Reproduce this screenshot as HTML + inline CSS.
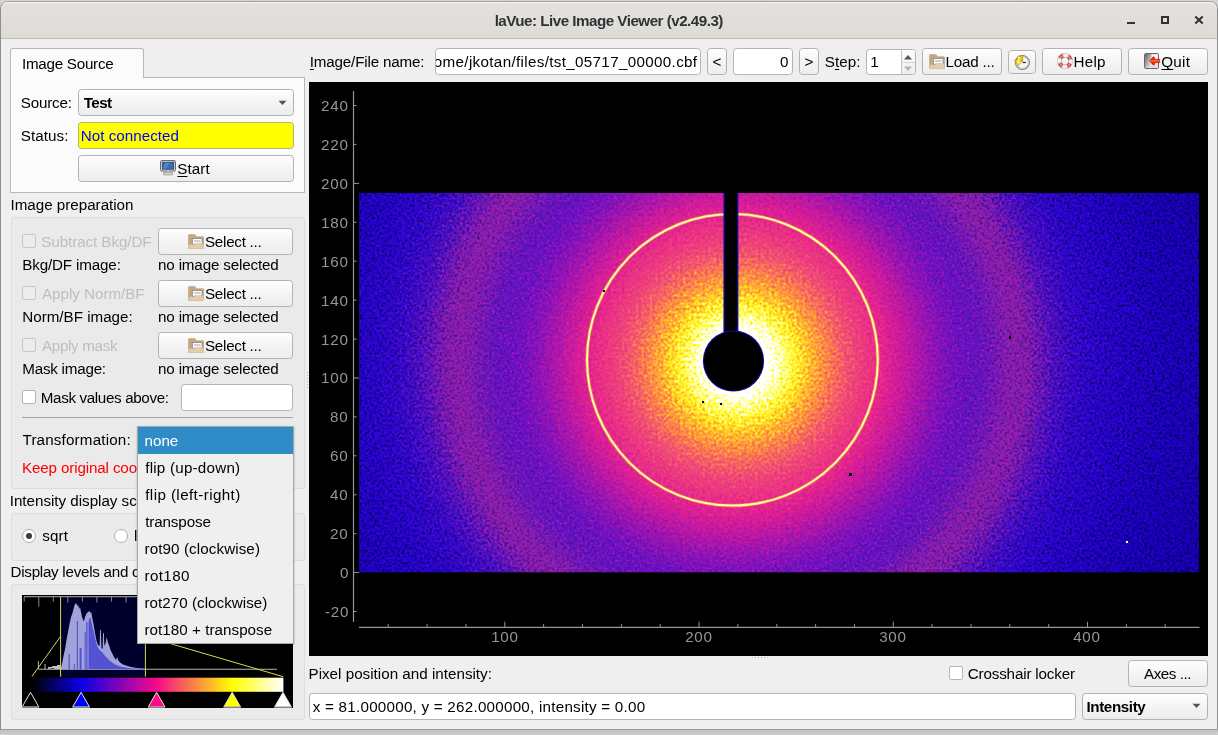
<!DOCTYPE html>
<html><head><meta charset="utf-8"><title>laVue</title>
<style>
html,body{margin:0;padding:0;}
body{width:1218px;height:735px;overflow:hidden;position:relative;background:#c9c9c9;
 font-family:"Liberation Sans",sans-serif;font-size:15.2px;color:#000;}
div,span,svg{position:absolute;box-sizing:border-box;}
.t{will-change:transform;white-space:nowrap;line-height:20px;height:20px;}
.b{font-weight:bold;}
.dis{color:#bebebe;}
.btn{border:1px solid #b2b2b2;border-radius:3.5px;background:linear-gradient(#fefefe,#f4f4f4 50%,#ededed);}
.inp{border:1px solid #b4b4b4;border-radius:3.5px;background:#fff;}
.grp{border:1px solid #dcdcdc;border-radius:3px;background:#eaeaea;}
.cb{border:1px solid #b4b4b4;border-radius:2px;background:#fff;}
.cbd{border:1px solid #c8c8c8;border-radius:2px;background:#ececec;}
.rad{border:1px solid #b0b0b0;border-radius:50%;background:#fff;}
.ax{color:#969696;}
u{text-decoration:underline;text-decoration-thickness:1.1px;text-underline-offset:2px;text-decoration-skip-ink:none;}

</style></head>
<body>
<div style="left:0px;top:0px;width:1218px;height:735px;background:linear-gradient(#d6d6d6 0,#d6d6d6 728px,#b9b9b9 729px,#c4c4c4 731px,#cdcdcd 735px);"></div>
<div style="left:0px;top:1px;width:1218px;height:728.6px;background:#efefef;border-radius:8px 8px 0 0;border:1px solid #a0a0a0;border-left-color:#8e8e8e;border-right-color:#8e8e8e;border-bottom-color:#9a9a9a;"></div>
<div style="left:1px;top:2px;width:1216px;height:37px;background:linear-gradient(#e4e1de,#dedbd7);border-radius:7px 7px 0 0;border-bottom:1px solid #c2bbb4;box-shadow:inset 0 1px 0 #f4f3f1;"></div>
<span id="title" class="t b" style="top:11px;letter-spacing:-0.513px;left:309px;width:600px;text-align:center;text-indent:-0.513px;color:#2e3436;">laVue: Live Image Viewer (v2.49.3)</span>
<svg style="left:1120px;top:8px" width="92" height="24" viewBox="1120 8 92 24"><rect x="1127" y="22" width="8" height="2" fill="#2e3436"/><rect x="1162" y="17" width="6" height="6" fill="none" stroke="#2e3436" stroke-width="2"/><path d="M1195.3 16.6 L1202.7 23.4 M1202.7 16.6 L1195.3 23.4" stroke="#2e3436" stroke-width="2.1" fill="none"/></svg>
<div style="left:10px;top:77px;width:295px;height:116px;background:#fbfbfb;border:1px solid #b8b8b8;"></div>
<div style="left:10px;top:48px;width:134px;height:30px;background:#fbfbfb;border:1px solid #b8b8b8;border-bottom:none;border-radius:3px 3px 0 0;"></div>
<span id="t1" class="t" style="top:54px;letter-spacing:-0.262px;left:22px;">Image Source</span>
<span id="t2" class="t" style="top:93px;letter-spacing:-0.194px;left:20px;transform:translateX(0.75px);">Source:</span>
<div class="btn" style="left:78px;top:89px;width:216px;height:27px;"></div>
<span id="t3" class="t b" style="top:93px;letter-spacing:-0.584px;left:83px;transform:translateX(0.75px);">Test</span>
<svg style="left:278px;top:99.5px" width="10" height="6"><path d="M0.5 0.8 L8.5 0.8 L4.5 5 Z" fill="#555"/></svg>
<span id="t4" class="t" style="top:126px;letter-spacing:0.066px;left:20px;transform:translateX(0.75px);">Status:</span>
<div style="left:78px;top:122px;width:216px;height:27px;background:#ffff00;border:1px solid #b4b46c;border-radius:3.5px;"></div>
<span id="t5" class="t" style="top:126px;letter-spacing:0.023px;left:80px;transform:translateX(0.75px);color:#0000ff;">Not connected</span>
<div class="btn" style="left:78px;top:155px;width:216px;height:27px;"></div>
<svg style="left:160px;top:160px" width="16" height="16" viewBox="0 0 16 16"><rect x="0.5" y="0.5" width="15" height="10.6" rx="1.3" fill="#d8d8d0" stroke="#6c6c6a"/><rect x="2.3" y="2.2" width="11.4" height="7" fill="#3a6cb8" stroke="#1c3f80" stroke-width="0.8"/><path d="M5.5 2.6 L9.5 2.6 L6.5 8.8 L2.7 8.8 Z" fill="#6a94d4" opacity="0.55"/><rect x="6" y="11.1" width="4" height="1.7" fill="#c8c8c4"/><rect x="3.3" y="12.6" width="9.4" height="2.2" rx="0.8" fill="#e4e4e0" stroke="#8a8a86" stroke-width="0.8"/></svg>
<span id="t6" class="t" style="top:159px;letter-spacing:0.079px;left:177px;transform:translateX(0.25px);"><u>S</u>tart</span>
<span id="t7" class="t" style="top:195px;letter-spacing:-0.017px;left:10px;transform:translateX(0.5px);">Image preparation</span>
<div class="grp" style="left:11px;top:217px;width:294px;height:272px;"></div>
<div class="cbd" style="left:22px;top:233.6px;width:14px;height:14px;"></div>
<span id="t8" class="t dis" style="top:232px;letter-spacing:-0.073px;left:41px;transform:translateX(0.25px);">Subtract Bkg/DF</span>
<div class="btn" style="left:158px;top:228px;width:135px;height:27px;"></div>
<svg style="left:188px;top:233.5px" width="16" height="16" viewBox="0 0 16 16"><path d="M0.4 14.0 V1.4 Q0.4 0.6 1.2 0.6 H6.6 Q7.3 0.6 7.6 1.3 L8.1 2.7 H14.8 Q15.7 2.7 15.7 3.6 V14.0 Z" fill="#c4a87e" stroke="#b2976e" stroke-width="0.5"/><rect x="4.3" y="4.4" width="9.8" height="6.0" fill="#fdfdfd" stroke="#8c8c8c" stroke-width="0.9"/><rect x="5.9" y="6.5" width="6.6" height="1.0" fill="#a2a2a2"/><path d="M0.4 11.7 Q0.4 10.8 1.3 10.8 H5.6 L7.1 9.4 H14.8 Q15.7 9.4 15.7 10.3 V13.7 Q15.7 14.6 14.8 14.6 H1.3 Q0.4 14.6 0.4 13.7 Z" fill="#e1cdab" stroke="#cbb28c" stroke-width="0.5"/></svg>
<span id="t9" class="t" style="top:232px;letter-spacing:-0.268px;left:204px;transform:translateX(1px);">Select ...</span>
<span id="t10" class="t" style="top:255px;letter-spacing:-0.152px;left:22px;transform:translateX(0.25px);">Bkg/DF image:</span>
<span id="t11" class="t" style="top:255px;letter-spacing:-0.155px;left:157px;transform:translateX(1px);">no image selected</span>
<div class="cbd" style="left:22px;top:285.6px;width:14px;height:14px;"></div>
<span id="t12" class="t dis" style="top:284px;letter-spacing:-0.028px;left:41px;transform:translateX(1px);">Apply Norm/BF</span>
<div class="btn" style="left:158px;top:280px;width:135px;height:27px;"></div>
<svg style="left:188px;top:285.5px" width="16" height="16" viewBox="0 0 16 16"><path d="M0.4 14.0 V1.4 Q0.4 0.6 1.2 0.6 H6.6 Q7.3 0.6 7.6 1.3 L8.1 2.7 H14.8 Q15.7 2.7 15.7 3.6 V14.0 Z" fill="#c4a87e" stroke="#b2976e" stroke-width="0.5"/><rect x="4.3" y="4.4" width="9.8" height="6.0" fill="#fdfdfd" stroke="#8c8c8c" stroke-width="0.9"/><rect x="5.9" y="6.5" width="6.6" height="1.0" fill="#a2a2a2"/><path d="M0.4 11.7 Q0.4 10.8 1.3 10.8 H5.6 L7.1 9.4 H14.8 Q15.7 9.4 15.7 10.3 V13.7 Q15.7 14.6 14.8 14.6 H1.3 Q0.4 14.6 0.4 13.7 Z" fill="#e1cdab" stroke="#cbb28c" stroke-width="0.5"/></svg>
<span id="t13" class="t" style="top:284px;letter-spacing:-0.268px;left:204px;transform:translateX(1px);">Select ...</span>
<span id="t14" class="t" style="top:307px;letter-spacing:-0.010px;left:22px;transform:translateX(0.25px);">Norm/BF image:</span>
<span id="t15" class="t" style="top:307px;letter-spacing:-0.155px;left:157px;transform:translateX(1px);">no image selected</span>
<div class="cbd" style="left:22px;top:337.6px;width:14px;height:14px;"></div>
<span id="t16" class="t dis" style="top:336px;letter-spacing:-0.321px;left:41px;transform:translateX(1px);">Apply mask</span>
<div class="btn" style="left:158px;top:332px;width:135px;height:27px;"></div>
<svg style="left:188px;top:337.5px" width="16" height="16" viewBox="0 0 16 16"><path d="M0.4 14.0 V1.4 Q0.4 0.6 1.2 0.6 H6.6 Q7.3 0.6 7.6 1.3 L8.1 2.7 H14.8 Q15.7 2.7 15.7 3.6 V14.0 Z" fill="#c4a87e" stroke="#b2976e" stroke-width="0.5"/><rect x="4.3" y="4.4" width="9.8" height="6.0" fill="#fdfdfd" stroke="#8c8c8c" stroke-width="0.9"/><rect x="5.9" y="6.5" width="6.6" height="1.0" fill="#a2a2a2"/><path d="M0.4 11.7 Q0.4 10.8 1.3 10.8 H5.6 L7.1 9.4 H14.8 Q15.7 9.4 15.7 10.3 V13.7 Q15.7 14.6 14.8 14.6 H1.3 Q0.4 14.6 0.4 13.7 Z" fill="#e1cdab" stroke="#cbb28c" stroke-width="0.5"/></svg>
<span id="t17" class="t" style="top:336px;letter-spacing:-0.268px;left:204px;transform:translateX(1px);">Select ...</span>
<span id="t18" class="t" style="top:359px;letter-spacing:-0.226px;left:22px;transform:translateX(0.25px);">Mask image:</span>
<span id="t19" class="t" style="top:359px;letter-spacing:-0.155px;left:157px;transform:translateX(1px);">no image selected</span>
<div class="cb" style="left:22px;top:390px;width:14px;height:14px;"></div>
<span id="t20" class="t" style="top:388px;letter-spacing:-0.353px;left:40px;transform:translateX(0.75px);">Mask values above:</span>
<div class="inp" style="left:181px;top:384px;width:112px;height:27px;"></div>
<div style="left:22px;top:417px;width:271px;height:1px;background:#a2a2a2;"></div>
<span id="t21" class="t" style="top:430px;letter-spacing:0.167px;left:22px;transform:translateX(0.5px);">Transformation:</span>
<span id="keep" class="t" style="top:458px;letter-spacing:-0.142px;left:22px;color:#ff0000;">Keep original coordinates</span>
<span id="ids" class="t" style="top:491px;letter-spacing:-0.024px;left:9px;transform:translateX(0.75px);">Intensity display scaling</span>
<div class="grp" style="left:11px;top:513px;width:294px;height:48px;"></div>
<div class="rad" style="left:22px;top:529px;width:14px;height:14px;"></div>
<div style="left:25.8px;top:532.8px;width:6.4px;height:6.4px;background:#3a3a3a;border-radius:50%;"></div>
<span id="t26" class="t" style="top:526px;letter-spacing:0.102px;left:42px;transform:translateX(0.25px);">sqrt</span>
<div class="rad" style="left:114px;top:529px;width:14px;height:14px;"></div>
<span id="t27" class="t" style="top:526px;left:133px;transform:translateX(1px);">linear</span>
<span id="dlc" class="t" style="top:562px;letter-spacing:-0.269px;left:10px;transform:translateX(0.5px);">Display levels and colors</span>
<div class="grp" style="left:11px;top:584px;width:294px;height:136px;"></div>
<span id="t30" class="t" style="top:52px;letter-spacing:-0.171px;left:309px;transform:translateX(0.75px);"><u>I</u>mage/File name:</span>
<div class="inp" style="left:435px;top:48px;width:266px;height:27px;overflow:hidden;"></div>
<div style="left:436px;top:49px;width:264px;height:25px;overflow:hidden;">
<span id="fname" class="t" style="top:3px;letter-spacing:0.334px;right:2.99px;">home/jkotan/files/tst_05717_00000.cbf</span>
</div>
<div class="btn" style="left:707px;top:48px;width:20px;height:27px;"></div>
<span id="t33" class="t" style="top:52px;left:417px;width:600px;text-align:center;text-indent:0.000px;">&lt;</span>
<div class="inp" style="left:733px;top:48px;width:60px;height:27px;"></div>
<span id="t34" class="t" style="top:52px;right:429.61px;">0</span>
<div class="btn" style="left:799px;top:48px;width:20px;height:27px;"></div>
<span id="t35" class="t" style="top:52px;left:509px;width:600px;text-align:center;text-indent:0.000px;">&gt;</span>
<span id="t36" class="t" style="top:52px;letter-spacing:0.045px;left:824px;transform:translateX(0.75px);">S<u>t</u>ep:</span>
<div class="inp" style="left:866px;top:49px;width:50px;height:26px;"></div>
<span id="t37" class="t" style="top:52px;left:870px;transform:translateX(0.25px);">1</span>
<div style="left:901px;top:50px;width:14px;height:24px;border-left:1px solid #c4c4c4;border-radius:0 3px 3px 0;background:linear-gradient(#fdfdfd,#ededed);"></div>
<div style="left:902px;top:62px;width:13px;height:1px;background:#d4d4d4;"></div>
<svg style="left:903.4px;top:53.6px" width="10" height="18"><path d="M1 5.5 L5 1 L9 5.5 Z" fill="#555"/><path d="M1 12.5 L5 17 L9 12.5 Z" fill="#b4b4b4"/></svg>
<div class="btn" style="left:922px;top:48px;width:80px;height:27px;"></div>
<svg style="left:929px;top:53.5px" width="16" height="16" viewBox="0 0 16 16"><path d="M0.4 14.0 V1.4 Q0.4 0.6 1.2 0.6 H6.6 Q7.3 0.6 7.6 1.3 L8.1 2.7 H14.8 Q15.7 2.7 15.7 3.6 V14.0 Z" fill="#c4a87e" stroke="#b2976e" stroke-width="0.5"/><rect x="4.3" y="4.4" width="9.8" height="6.0" fill="#fdfdfd" stroke="#8c8c8c" stroke-width="0.9"/><rect x="5.9" y="6.5" width="6.6" height="1.0" fill="#a2a2a2"/><path d="M0.4 11.7 Q0.4 10.8 1.3 10.8 H5.6 L7.1 9.4 H14.8 Q15.7 9.4 15.7 10.3 V13.7 Q15.7 14.6 14.8 14.6 H1.3 Q0.4 14.6 0.4 13.7 Z" fill="#e1cdab" stroke="#cbb28c" stroke-width="0.5"/></svg>
<span id="t38" class="t" style="top:52px;letter-spacing:-0.220px;left:945px;transform:translateX(0.5px);">Load ...</span>
<div class="btn" style="left:1008px;top:50px;width:28px;height:24px;"></div>
<svg style="left:1006px;top:48px" width="32" height="28" viewBox="0 0 32 28"><defs><linearGradient id="ya" x1="0" y1="0" x2="1" y2="0"><stop offset="0" stop-color="#e8c410"/><stop offset="0.5" stop-color="#fff06a"/><stop offset="1" stop-color="#e8c410"/></linearGradient></defs><circle cx="16.4" cy="14.5" r="7.0" fill="#f4f4f2" stroke="#7e7e7a" stroke-width="1.1"/><circle cx="16.4" cy="14.5" r="5.9" fill="none" stroke="#c4c6c2" stroke-width="1.0"/><path d="M16.9 14.5 H19.8" stroke="#111" stroke-width="1.1"/><path d="M16.4 11 V14" stroke="#888" stroke-width="0.9"/><path d="M16.7 8.2 H12.6 Q11.4 8.4 11.4 9.9 V12.2 H8.3 L12.4 17.6 L16.7 12.6 H14.5 V11.1 L16.7 10.9 Z" fill="url(#ya)" stroke="#c8a000" stroke-width="0.8" stroke-linejoin="round"/></svg>
<div class="btn" style="left:1042px;top:48px;width:80px;height:27px;"></div>
<svg style="left:1056.8px;top:52.9px" width="16" height="16" viewBox="0 0 16 16"><circle cx="8" cy="8" r="5.75" fill="none" stroke="#f2f2f0" stroke-width="4.1"/><circle cx="8" cy="8" r="5.75" fill="none" stroke="#e63c3c" stroke-width="4.1" stroke-dasharray="4.0 5.03" stroke-dashoffset="-2.5"/><circle cx="8" cy="8" r="5.75" fill="none" stroke="#fbe0e0" stroke-width="0.7" stroke-dasharray="4.0 5.03" stroke-dashoffset="-2.5"/><circle cx="8" cy="8" r="7.75" fill="none" stroke="#b4b4b0" stroke-width="0.6"/><circle cx="8" cy="8" r="3.7" fill="none" stroke="#a4a8a4" stroke-width="0.8"/></svg>
<span id="t39" class="t" style="top:52px;letter-spacing:0.278px;left:1073px;transform:translateX(0.5px);">Help</span>
<div class="btn" style="left:1128px;top:48px;width:80px;height:27px;"></div>
<svg style="left:1144px;top:53px" width="17" height="16" viewBox="0 0 17 16"><defs><linearGradient id="dg" x1="0" y1="0" x2="1" y2="0.9"><stop offset="0" stop-color="#606060"/><stop offset="0.55" stop-color="#b4b4b4"/><stop offset="1" stop-color="#ececec"/></linearGradient><linearGradient id="ar" x1="0" y1="0" x2="0" y2="1"><stop offset="0" stop-color="#d80c04"/><stop offset="0.36" stop-color="#e82c10"/><stop offset="0.5" stop-color="#ff8428"/><stop offset="0.64" stop-color="#e82c10"/><stop offset="1" stop-color="#d80c04"/></linearGradient></defs><rect x="0.6" y="0.6" width="13.8" height="14.8" rx="1" fill="#fdfdfd" stroke="#555753" stroke-width="1"/><path d="M1.1 1.1 H7.6 V11.6 L3 14.9 H1.1 Z" fill="url(#dg)"/><path d="M3 14.9 L7.6 11.6 V7 H13.9 V14.9 Z" fill="#dfe0dc"/><path d="M5.5 7.9 L9.6 3.6 L10.9 4.9 L9.6 6.3 H15.6 V9.5 H9.6 L10.9 10.9 L9.6 12.2 Z" fill="url(#ar)" stroke="#d41408" stroke-width="0.7" stroke-linejoin="round"/></svg>
<span id="t40" class="t" style="top:52px;letter-spacing:0.279px;left:1161px;transform:translateX(0.25px);"><u>Q</u>uit</span>
<span id="t41" class="t" style="top:664px;letter-spacing:0.008px;left:308px;transform:translateX(0.5px);">Pixel position and intensity:</span>
<div class="cb" style="left:948.6px;top:665.6px;width:14px;height:14px;"></div>
<span id="t42" class="t" style="top:664px;letter-spacing:-0.160px;left:967px;transform:translateX(0.75px);">Crosshair locker</span>
<div class="btn" style="left:1128px;top:660px;width:80px;height:27px;"></div>
<span id="t43" class="t" style="top:664px;letter-spacing:-0.448px;left:1143px;transform:translateX(1px);">Axes ...</span>
<div class="inp" style="left:309px;top:693px;width:767px;height:27px;"></div>
<span id="t44" class="t" style="top:697px;letter-spacing:0.241px;left:312px;transform:translateX(0.75px);">x = 81.000000, y = 262.000000, intensity = 0.00</span>
<div class="btn" style="left:1082px;top:693px;width:126px;height:27px;"></div>
<span id="t45" class="t b" style="top:697px;letter-spacing:-0.394px;left:1086px;transform:translateX(0.5px);">Intensity</span>
<svg style="left:1192.2px;top:703.2px" width="10" height="6"><path d="M0.5 0.8 L8.5 0.8 L4.5 5 Z" fill="#555"/></svg>
<div style="left:752px;top:657px;width:17px;height:1px;background:repeating-linear-gradient(90deg,#b0b0b0 0,#b0b0b0 1px,transparent 1px,transparent 3px);"></div>
<div style="left:306.5px;top:372px;width:1px;height:17px;background:repeating-linear-gradient(#b0b0b0 0,#b0b0b0 1px,transparent 1px,transparent 3px);"></div>
<div style="left:309px;top:82px;width:899px;height:574px;background:#000;"></div>
<svg style="left:309px;top:82px" width="899" height="574" viewBox="309 82 899 574"><defs><radialGradient id="rg" gradientUnits="userSpaceOnUse" cx="737.3" cy="362.0" r="512.0"><stop offset="0.0000" stop-color="#ffffff"/><stop offset="0.0723" stop-color="#ffffff"/><stop offset="0.0879" stop-color="#ffffa0"/><stop offset="0.1035" stop-color="#ffff40"/><stop offset="0.1230" stop-color="#ffe820"/><stop offset="0.1484" stop-color="#ffb030"/><stop offset="0.1836" stop-color="#fa7850"/><stop offset="0.2109" stop-color="#f25470"/><stop offset="0.2422" stop-color="#ec3c7e"/><stop offset="0.2754" stop-color="#e82c88"/><stop offset="0.2930" stop-color="#e2228e"/><stop offset="0.3223" stop-color="#d01c9a"/><stop offset="0.3516" stop-color="#b018a8"/><stop offset="0.3906" stop-color="#8414bc"/><stop offset="0.4297" stop-color="#6612c8"/><stop offset="0.4688" stop-color="#5c14c8"/><stop offset="0.5000" stop-color="#6c1ac0"/><stop offset="0.5312" stop-color="#8a22b2"/><stop offset="0.5625" stop-color="#8c22b0"/><stop offset="0.5898" stop-color="#6a1ac2"/><stop offset="0.6211" stop-color="#4410d2"/><stop offset="0.6641" stop-color="#2e08da"/><stop offset="0.7422" stop-color="#2404d8"/><stop offset="0.8398" stop-color="#1c02cc"/><stop offset="1.0000" stop-color="#1400b8"/></radialGradient><filter id="dp" x="0" y="0" width="100%" height="100%" color-interpolation-filters="sRGB"><feTurbulence type="fractalNoise" baseFrequency="0.36" numOctaves="1" seed="11" result="t"/><feDisplacementMap in="SourceGraphic" in2="t" scale="64" xChannelSelector="R" yChannelSelector="G"/></filter><filter id="nz" x="0" y="0" width="100%" height="100%" color-interpolation-filters="sRGB"><feTurbulence type="fractalNoise" baseFrequency="0.4" numOctaves="1" seed="7" result="t"/><feColorMatrix in="t" type="matrix" values="0 0 0 0 0.03  0 0 0 0 0  0 0 0 0 0.3  3.6 0 0 0 -1.62"/></filter><filter id="nl" x="0" y="0" width="100%" height="100%" color-interpolation-filters="sRGB"><feTurbulence type="fractalNoise" baseFrequency="0.4" numOctaves="1" seed="31" result="t"/><feColorMatrix in="t" type="matrix" values="0 0 0 0 0.78  0 0 0 0 0.08  0 0 0 0 0.72  0 3.4 0 0 -1.62"/></filter><radialGradient id="mg2" gradientUnits="userSpaceOnUse" cx="733.3" cy="361.0" r="512.0"><stop offset="0.28" stop-color="#000"/><stop offset="0.36" stop-color="#fff"/><stop offset="0.58" stop-color="#fff"/><stop offset="0.7" stop-color="#555"/><stop offset="0.85" stop-color="#2a2a2a"/></radialGradient><mask id="mk2" maskUnits="userSpaceOnUse" x="359" y="193" width="841" height="380"><rect x="359" y="193" width="841" height="380" fill="url(#mg2)"/></mask><radialGradient id="mg" gradientUnits="userSpaceOnUse" cx="733.3" cy="361.0" r="512.0"><stop offset="0.3" stop-color="#000"/><stop offset="0.55" stop-color="#777"/><stop offset="0.8" stop-color="#fff"/></radialGradient><mask id="mk" maskUnits="userSpaceOnUse" x="359" y="193" width="841" height="380"><rect x="359" y="193" width="841" height="380" fill="url(#mg)"/></mask><clipPath id="ic"><rect x="359.2" y="193" width="839.8" height="379.3"/></clipPath></defs><g clip-path="url(#ic)"><rect x="329" y="163" width="901" height="440" fill="url(#rg)" filter="url(#dp)"/><ellipse cx="732.4" cy="359.8" rx="145.4" ry="145.8" fill="none" stroke="#ffc040" stroke-width="3.6" opacity="0.45"/><ellipse cx="732.4" cy="359.8" rx="145.4" ry="145.8" fill="none" stroke="#ffff98" stroke-width="2.0"/><rect x="359" y="193" width="841" height="380" filter="url(#nl)" mask="url(#mk2)" opacity="0.75"/><rect x="359" y="193" width="841" height="380" filter="url(#nz)" mask="url(#mk)" opacity="0.85"/><rect x="723.4" y="193" width="15" height="150" fill="#1c08c8"/><rect x="724.6" y="193" width="12.6" height="150" fill="#000"/><circle cx="733.5" cy="361.0" r="30.6" fill="#1a06a0"/><circle cx="733.5" cy="361.0" r="29.6" fill="#000"/><rect x="702" y="401" width="2" height="2" fill="#000"/><rect x="720" y="403" width="2" height="2" fill="#000"/><rect x="849" y="473" width="3" height="3" fill="#000"/><rect x="1009" y="336" width="2" height="3" fill="#000"/><rect x="603" y="290" width="2" height="2" fill="#000"/><rect x="1126" y="541" width="2" height="2" fill="#fff"/></g><path d="M353.5 91 V622" stroke="#969696" stroke-width="1.2" fill="none"/><path d="M353.5 611.5 h3" stroke="#969696" stroke-width="1"/><path d="M353.5 572.6 h5.6" stroke="#969696" stroke-width="1"/><path d="M353.5 533.7 h3" stroke="#969696" stroke-width="1"/><path d="M353.5 494.8 h3" stroke="#969696" stroke-width="1"/><path d="M353.5 455.8 h3" stroke="#969696" stroke-width="1"/><path d="M353.5 416.9 h3" stroke="#969696" stroke-width="1"/><path d="M353.5 378.0 h5.6" stroke="#969696" stroke-width="1"/><path d="M353.5 339.1 h3" stroke="#969696" stroke-width="1"/><path d="M353.5 300.1 h3" stroke="#969696" stroke-width="1"/><path d="M353.5 261.2 h3" stroke="#969696" stroke-width="1"/><path d="M353.5 222.3 h3" stroke="#969696" stroke-width="1"/><path d="M353.5 183.4 h5.6" stroke="#969696" stroke-width="1"/><path d="M353.5 144.4 h3" stroke="#969696" stroke-width="1"/><path d="M353.5 105.5 h3" stroke="#969696" stroke-width="1"/><path d="M359 627.3 H1199.5" stroke="#969696" stroke-width="1.2" fill="none"/><path d="M388.2 627.3 v-3.2" stroke="#969696" stroke-width="1"/><path d="M427.1 627.3 v-3.2" stroke="#969696" stroke-width="1"/><path d="M466.0 627.3 v-3.2" stroke="#969696" stroke-width="1"/><path d="M504.8 627.3 v-5.6" stroke="#969696" stroke-width="1"/><path d="M543.6 627.3 v-3.2" stroke="#969696" stroke-width="1"/><path d="M582.5 627.3 v-3.2" stroke="#969696" stroke-width="1"/><path d="M621.4 627.3 v-3.2" stroke="#969696" stroke-width="1"/><path d="M660.2 627.3 v-3.2" stroke="#969696" stroke-width="1"/><path d="M699.0 627.3 v-5.6" stroke="#969696" stroke-width="1"/><path d="M737.9 627.3 v-3.2" stroke="#969696" stroke-width="1"/><path d="M776.8 627.3 v-3.2" stroke="#969696" stroke-width="1"/><path d="M815.6 627.3 v-3.2" stroke="#969696" stroke-width="1"/><path d="M854.5 627.3 v-3.2" stroke="#969696" stroke-width="1"/><path d="M893.3 627.3 v-5.6" stroke="#969696" stroke-width="1"/><path d="M932.1 627.3 v-3.2" stroke="#969696" stroke-width="1"/><path d="M971.0 627.3 v-3.2" stroke="#969696" stroke-width="1"/><path d="M1009.8 627.3 v-3.2" stroke="#969696" stroke-width="1"/><path d="M1048.7 627.3 v-3.2" stroke="#969696" stroke-width="1"/><path d="M1087.5 627.3 v-5.6" stroke="#969696" stroke-width="1"/><path d="M1126.4 627.3 v-3.2" stroke="#969696" stroke-width="1"/><path d="M1165.2 627.3 v-3.2" stroke="#969696" stroke-width="1"/></svg>
<span id="yl-20" class="t ax" style="top:602px;right:869.11px;letter-spacing:0.8px;">-20</span>
<span id="yl0" class="t ax" style="top:563px;right:869.11px;letter-spacing:0.8px;">0</span>
<span id="yl20" class="t ax" style="top:524px;right:869.11px;letter-spacing:0.8px;">20</span>
<span id="yl40" class="t ax" style="top:485px;right:869.11px;letter-spacing:0.8px;">40</span>
<span id="yl60" class="t ax" style="top:446px;right:869.11px;letter-spacing:0.8px;">60</span>
<span id="yl80" class="t ax" style="top:407px;right:869.11px;letter-spacing:0.8px;">80</span>
<span id="yl100" class="t ax" style="top:368px;right:869.11px;letter-spacing:0.8px;">100</span>
<span id="yl120" class="t ax" style="top:330px;right:869.11px;letter-spacing:0.8px;">120</span>
<span id="yl140" class="t ax" style="top:291px;right:869.11px;letter-spacing:0.8px;">140</span>
<span id="yl160" class="t ax" style="top:252px;right:869.11px;letter-spacing:0.8px;">160</span>
<span id="yl180" class="t ax" style="top:213px;right:869.11px;letter-spacing:0.8px;">180</span>
<span id="yl200" class="t ax" style="top:174px;right:869.11px;letter-spacing:0.8px;">200</span>
<span id="yl220" class="t ax" style="top:135px;right:869.11px;letter-spacing:0.8px;">220</span>
<span id="yl240" class="t ax" style="top:96px;right:869.11px;letter-spacing:0.8px;">240</span>
<span id="xl100" class="t ax" style="top:627px;left:204.6px;width:600px;text-align:center;text-indent:0.000px;letter-spacing:0.8px;">100</span>
<span id="xl200" class="t ax" style="top:627px;left:398.85px;width:600px;text-align:center;text-indent:0.000px;letter-spacing:0.8px;">200</span>
<span id="xl300" class="t ax" style="top:627px;left:593.1px;width:600px;text-align:center;text-indent:0.000px;letter-spacing:0.8px;">300</span>
<span id="xl400" class="t ax" style="top:627px;left:787.35px;width:600px;text-align:center;text-indent:0.000px;letter-spacing:0.8px;">400</span>
<svg style="left:22px;top:595px" width="271" height="113" viewBox="22 595 271 113"><defs><linearGradient id="cm" x1="0" x2="1" y1="0" y2="0"><stop offset="0" stop-color="#000"/><stop offset="0.196" stop-color="#0a00e6"/><stop offset="0.496" stop-color="#f50a8c"/><stop offset="0.797" stop-color="#ffff00"/><stop offset="1" stop-color="#ffffff"/></linearGradient></defs><rect x="22" y="595" width="271" height="113" fill="#000"/><rect x="60.6" y="597" width="84.8" height="79.7" fill="#00002c"/><path d="M24 596.6 H291" stroke="#8c8c8c" stroke-width="1.1"/><path d="M24.2 596.6 v5" stroke="#8a8a8a" stroke-width="1"/><path d="M38.8 596.6 v10" stroke="#8a8a8a" stroke-width="1"/><path d="M53.3 596.6 v5" stroke="#8a8a8a" stroke-width="1"/><path d="M67.8 596.6 v6" stroke="#8a8a8a" stroke-width="1"/><path d="M82.4 596.6 v5" stroke="#8a8a8a" stroke-width="1"/><path d="M96.9 596.6 v6" stroke="#8a8a8a" stroke-width="1"/><path d="M111.5 596.6 v5" stroke="#8a8a8a" stroke-width="1"/><path d="M126.0 596.6 v6" stroke="#8a8a8a" stroke-width="1"/><path d="M140.6 596.6 v5" stroke="#8a8a8a" stroke-width="1"/><path d="M155.2 596.6 v6" stroke="#8a8a8a" stroke-width="1"/><path d="M169.7 596.6 v5" stroke="#8a8a8a" stroke-width="1"/><path d="M184.3 596.6 v6" stroke="#8a8a8a" stroke-width="1"/><path d="M198.8 596.6 v5" stroke="#8a8a8a" stroke-width="1"/><path d="M213.4 596.6 v6" stroke="#8a8a8a" stroke-width="1"/><path d="M227.9 596.6 v5" stroke="#8a8a8a" stroke-width="1"/><path d="M242.5 596.6 v6" stroke="#8a8a8a" stroke-width="1"/><path d="M257.0 596.6 v5" stroke="#8a8a8a" stroke-width="1"/><path d="M271.6 596.6 v6" stroke="#8a8a8a" stroke-width="1"/><path d="M286.1 596.6 v5" stroke="#8a8a8a" stroke-width="1"/><path d="M38.6 669.3 H277" stroke="#b4b4b4" stroke-width="1.1"/><path d="M38.4 661 v8" stroke="#b4b4b4" stroke-width="1"/><path d="M44.5 669 v-5 h1 v5 M48 669 v-2 h4 v-1 h2 v2 M54 669 v-3 h3 v-1 h3.5 v4 Z" fill="#c0c0c0" stroke="none"/><path d="M60.6 669.0 L62.0 664.0 L63.5 656.0 L65.0 649.0 L66.5 640.0 L68.0 632.0 L69.5 624.0 L71.0 617.0 L72.5 613.0 L74.0 607.0 L75.0 604.0 L76.2 603.0 L77.2 606.0 L78.2 604.5 L79.0 609.0 L80.0 607.0 L81.0 612.0 L82.3 618.0 L83.9 621.5 L85.0 617.0 L86.5 613.5 L88.0 612.0 L89.5 611.0 L90.5 613.0 L91.3 612.0 L92.3 618.0 L93.5 624.0 L95.0 633.0 L96.6 641.0 L98.0 645.0 L99.6 646.0 L100.0 630.0 L100.9 630.0 L101.4 648.0 L102.6 649.0 L103.0 633.0 L103.9 633.0 L104.3 646.0 L105.6 643.0 L106.8 637.0 L107.8 642.0 L109.0 645.0 L110.5 650.0 L112.0 653.0 L114.0 657.0 L116.0 660.0 L117.2 657.0 L118.2 660.0 L120.0 662.5 L123.0 664.5 L126.0 665.5 L130.0 666.8 L135.0 667.8 L140.0 668.4 L145.4 668.8 L145.4 669.3 L60.6 669.3 Z" fill="#a2a2da"/><path d="M88.5 669.0 L88.5 622.0 L89.5 618.0 L90.5 618.0 L91.3 622.0 L92.3 626.0 L93.5 631.0 L95.0 638.0 L96.6 644.0 L98.0 648.0 L100.0 650.5 L102.0 652.0 L104.0 654.5 L106.0 657.0 L108.0 659.0 L110.0 661.0 L113.0 663.0 L116.0 665.0 L120.0 666.5 L125.0 667.6 L132.0 668.4 L140.0 668.9 L145.4 669.2 L145.4 669.3 Z" fill="#5252d2"/><rect x="68.6" y="654" width="1.2" height="15.3" fill="#5252d2"/><rect x="73.8" y="664" width="1.0" height="5.3" fill="#5252d2"/><rect x="76.8" y="621" width="1.1" height="48.3" fill="#5252d2"/><rect x="79.6" y="648" width="2.0" height="21.3" fill="#5252d2"/><rect x="84.6" y="632" width="1.0" height="37.3" fill="#5252d2"/><rect x="86.2" y="622" width="1.3" height="47.3" fill="#5252d2"/><path d="M60.6 596.6 V676.7 M145.4 596.6 V676.7 M60.6 636.3 L32 676.4 M145.4 636.3 L283.2 676.7" stroke="#d8d850" stroke-width="1" fill="none"/><rect x="32" y="677.7" width="251.4" height="14.1" fill="url(#cm)"/><path d="M30.5 692.3 L38.9 707.0 H22.1 Z" fill="#000" stroke="#e4e4e4" stroke-width="1"/><path d="M21.9 707.2 H39.1" stroke="#8a8a8a" stroke-width="1.2"/><path d="M81.1 692.3 L89.5 707.0 H72.69999999999999 Z" fill="#0000ff" stroke="#e4e4e4" stroke-width="1"/><path d="M72.5 707.2 H89.69999999999999" stroke="#8a8a8a" stroke-width="1.2"/><path d="M156.6 692.3 L165.0 707.0 H148.2 Z" fill="#ff0a8c" stroke="#e4e4e4" stroke-width="1"/><path d="M148.0 707.2 H165.2" stroke="#8a8a8a" stroke-width="1.2"/><path d="M232.2 692.3 L240.6 707.0 H223.79999999999998 Z" fill="#ffff00" stroke="#e4e4e4" stroke-width="1"/><path d="M223.6 707.2 H240.79999999999998" stroke="#8a8a8a" stroke-width="1.2"/><path d="M283.0 692.3 L291.4 707.0 H274.6 Z" fill="#ffffff" stroke="#e4e4e4" stroke-width="1"/><path d="M274.4 707.2 H291.6" stroke="#8a8a8a" stroke-width="1.2"/></svg>
<div style="left:137px;top:426px;width:157px;height:218px;background:#efefef;border:1px solid #a6a6a6;box-shadow:0 1px 2px rgba(0,0,0,0.25);"></div>
<div style="left:138px;top:427px;width:155px;height:27px;background:#308cc6;"></div>
<span id="pi0" class="t" style="top:431px;letter-spacing:-0.004px;left:144px;transform:translateX(0.5px);color:#fff;">none</span>
<span id="pi1" class="t" style="top:458px;letter-spacing:0.219px;left:145px;transform:translateX(0.25px);">flip (up-down)</span>
<span id="pi2" class="t" style="top:485px;letter-spacing:0.402px;left:145px;transform:translateX(0.25px);">flip (left-right)</span>
<span id="pi3" class="t" style="top:512px;letter-spacing:-0.137px;left:145px;transform:translateX(0.25px);">transpose</span>
<span id="pi4" class="t" style="top:539px;letter-spacing:0.095px;left:144px;transform:translateX(0.5px);">rot90 (clockwise)</span>
<span id="pi5" class="t" style="top:566px;letter-spacing:0.365px;left:144px;transform:translateX(0.5px);">rot180</span>
<span id="pi6" class="t" style="top:593px;letter-spacing:0.027px;left:144px;transform:translateX(0.5px);">rot270 (clockwise)</span>
<span id="pi7" class="t" style="top:620px;letter-spacing:0.036px;left:144px;transform:translateX(0.5px);">rot180 + transpose</span>
</body></html>
